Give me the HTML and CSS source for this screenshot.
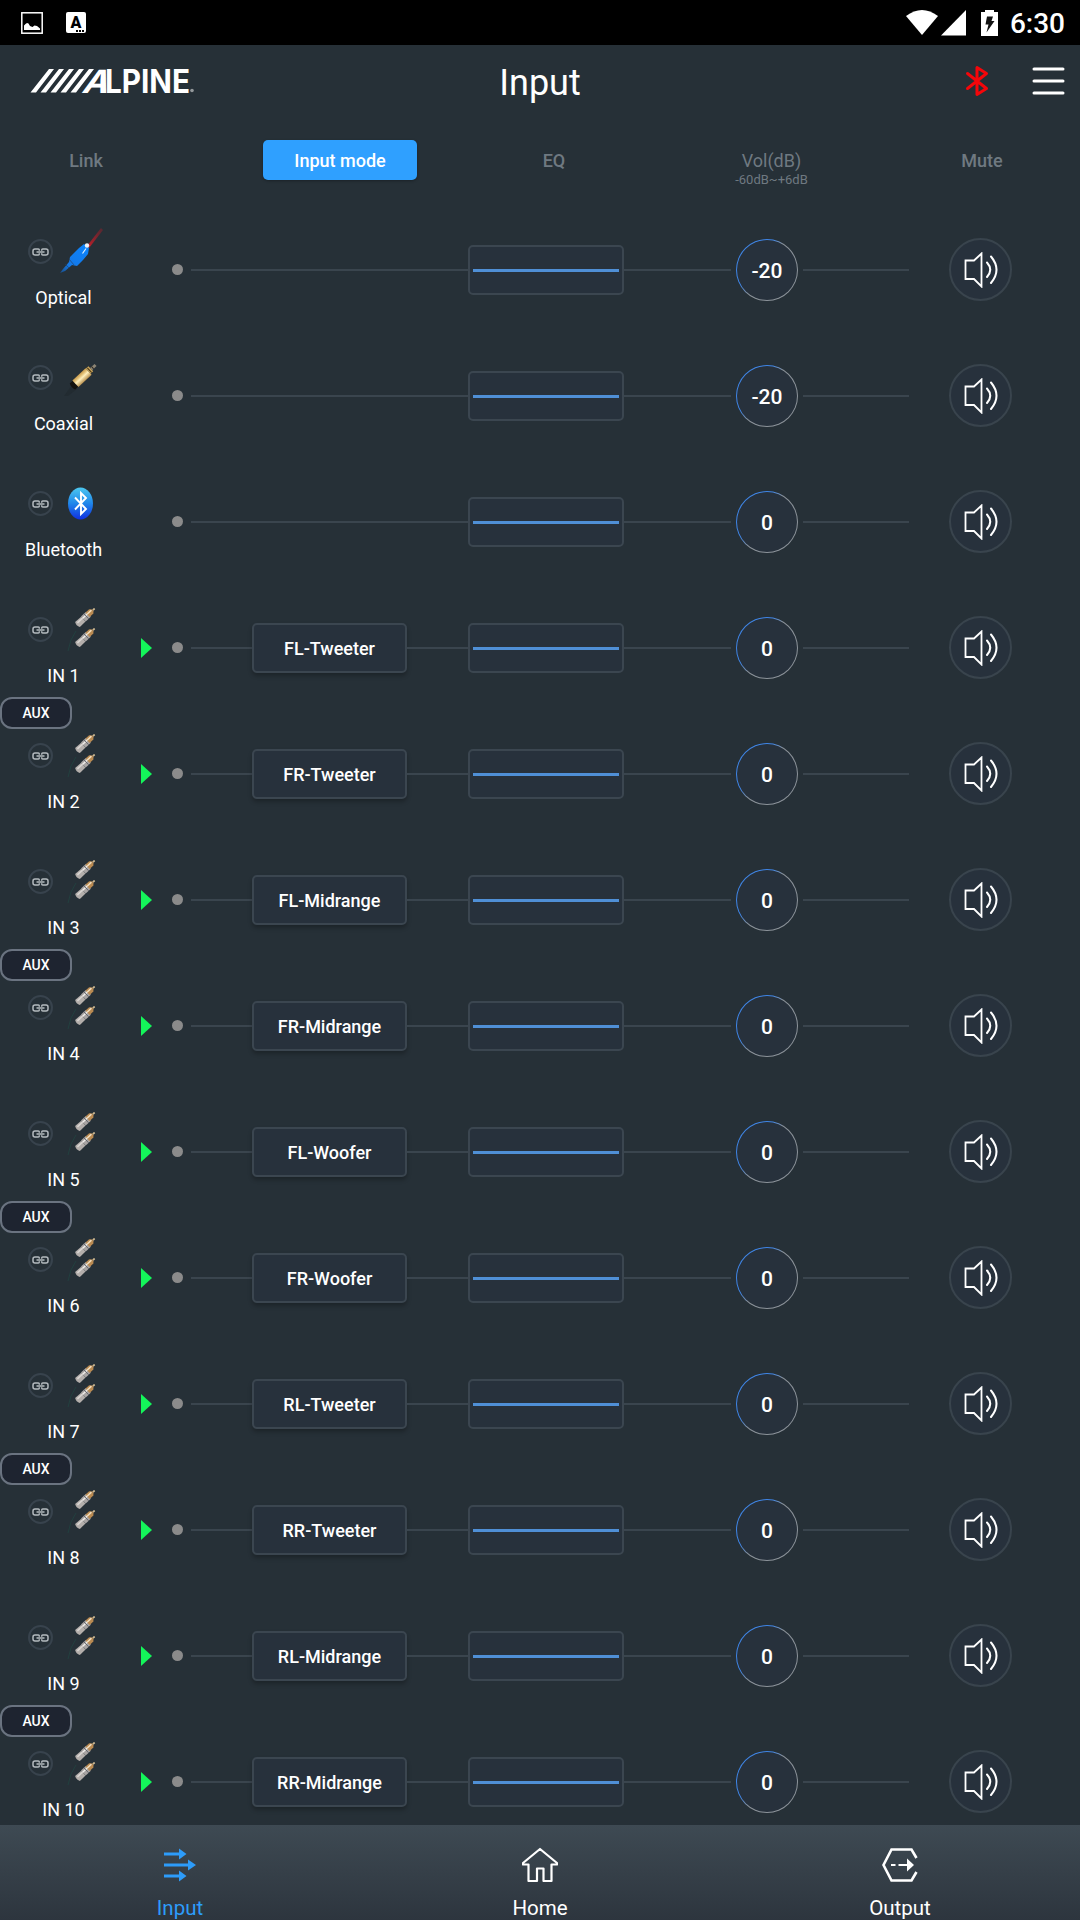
FILE: index.html
```html
<!DOCTYPE html>
<html lang="en">
<head>
  <meta charset="UTF-8" />
  <meta name="viewport" content="width=device-width, initial-scale=1.0"/>
  <title>Input</title>
  <link rel="stylesheet" href="styles.css">
</head>
<body>

  <svg class="sprite" width="0" height="0">
    <defs>
      <linearGradient id="blue-cable" x1="0" y1="1" x2="1" y2="0">
        <stop offset="0" stop-color="#1a4d86"/>
        <stop offset="0.3" stop-color="#1478e6"/>
        <stop offset="1" stop-color="#0a84ff"/>
      </linearGradient>
      <linearGradient id="beam" x1="0" y1="1" x2="1" y2="0">
        <stop offset="0" stop-color="#c81e28"/>
        <stop offset="1" stop-color="#a01c28" stop-opacity="0.35"/>
      </linearGradient>
      <linearGradient id="gold" x1="0" y1="0" x2="0" y2="1">
        <stop offset="0" stop-color="#c79a4c"/>
        <stop offset="0.25" stop-color="#e2c077"/>
        <stop offset="0.5" stop-color="#fff0bd"/>
        <stop offset="1" stop-color="#b8904f"/>
      </linearGradient>
      <linearGradient id="bt-oval" x1="0" y1="0" x2="0" y2="1">
        <stop offset="0" stop-color="#4cc8f0"/>
        <stop offset="0.5" stop-color="#1f86ea"/>
        <stop offset="1" stop-color="#1030e0"/>
      </linearGradient>
    </defs>

    <symbol id="icon-link" viewBox="0 0 17 8">
      <path d="M7.300 2.800V1.900Q7.300 1 6.300 1H3Q1 1 1 3v2Q1 7 3 7h3.300q1 0 1-1V5.200M9.700 2.800V1.900Q9.700 1 10.700 1H14Q16 1 16 3v2Q16 7 14 7h-3.300q-1 0-1-1V5.200M4.500 4h8" fill="none" stroke="#b4babf" stroke-width="1.500"/>
    </symbol>

    <symbol id="icon-optical" viewBox="0 0 46 48">
      <path d="M27 20 41 2l2 2L29 22z" fill="url(#beam)"/>
      <path d="M19 22 24 18l5 4-1 6-5 6-6 6-5-1-7 6-5 2 3-4 6-7 1-5z" fill="url(#blue-cable)"/>
      <path d="M9 33l5 6M5 38l4 4" stroke="#27405c" stroke-width="0.600"/>
      <path d="m22.500 27.500 3.500-5" stroke="#dff1ff" stroke-width="1.200"/>
      <circle cx="27" cy="19.500" r="2.200" fill="#eef3f6"/>
    </symbol>

    <symbol id="icon-coaxial" viewBox="0 0 46 48">
      <path d="M4 44 12 33l5 4-9 7z" fill="#1c2023" opacity="0.300"/>
      <g transform="translate(12.500 34.500) rotate(-43)">
        <path d="M0-4H5V4H0Q-2 0 0-4z" fill="#15130f"/>
        <path d="M4-4.500H22V4.500H4z" fill="url(#gold)"/>
        <path d="M22-4h3.500v7h-3.500z" fill="#c9a55a"/>
        <path d="M23.500-3.500v6.500" stroke="#4a3819"/>
        <path d="M25.500-1.500h6v3h-6z" fill="#8c8474"/>
        <path d="M27.500-1.500v3" stroke="#2b261d"/>
      </g>
    </symbol>

    <symbol id="icon-bt-oval" viewBox="0 0 46 48">
      <ellipse cx="20.500" cy="25.500" rx="12.500" ry="16" fill="url(#bt-oval)"/>
      <path d="M15 19.500 26 31 21 36V15L26 20 15 31.500" fill="none" stroke="#fff" stroke-width="1.900"/>
    </symbol>

    <symbol id="plug" viewBox="0 0 21 20">
      <g transform="translate(3 16.500) rotate(-43)">
        <path d="M0-3.500 8-3.200V3.200L0 3.500Q-2 0 0-3.500z" fill="#b3aeab"/>
        <path d="M1-1.200H12" stroke="#d9d5d2" stroke-width="1.600"/>
        <path d="M8-3.500h7v7H8z" fill="#a9a5a4"/>
        <path d="M8-1h7" stroke="#f1eeea" stroke-width="1.500"/>
        <path d="M12-3.500v7" stroke="#4b4f55" stroke-width="0.700"/>
        <path d="M14-3.300h5L21-1V1l-2 1.800h-5z" fill="#b98a52"/>
        <path d="M14-1h6" stroke="#f2dfc0" stroke-width="1.500"/>
        <path d="M21 0h2.500" stroke="#cdb791" stroke-width="1.800"/>
      </g>
    </symbol>

    <symbol id="icon-rca" viewBox="0 0 46 48">
      <path d="M8 47q2-12 8-20" fill="none" stroke="#22403f" stroke-width="1"/>
      <use href="#plug" x="14.500" y="4" width="21" height="20"/>
      <use href="#plug" x="14.500" y="24" width="21" height="20"/>
    </symbol>

    <symbol id="icon-speaker" viewBox="0 0 34 36">
      <path d="M1.500 8.500H10L17.500 1.500V34.500L10 27H1.500z" stroke-width="1.800"/>
      <path d="M23 10.500q6.500 7.200 0 14.500M27 4.500q11 13.300 0 26.500" stroke-width="2" stroke-linecap="round"/>
    </symbol>
  </svg>

  <div class="status-bar">
    <svg width="22" height="22" viewBox="0 0 22 22">
      <rect x="0.800" y="0.800" width="20.400" height="20.400" fill="none" stroke="#fff" stroke-width="1.500"/>
      <path d="M3 18V13.500L4.500 12 6 11l1.500.5L9 14l2.500 1 2-1.500 2.500.5 3 2.500V18z" fill="#fff"/>
    </svg>
    <span class="lang-badge">A</span>
    <div class="status-right">
      <svg width="32" height="26" viewBox="0 0 32 26">
        <path d="M0 6Q16-6 32 6L16 25z" fill="#fff"/>
      </svg>
      <svg width="25" height="26" viewBox="0 0 25 26">
        <path d="M25 0V25.500H0z" fill="#fff"/>
      </svg>
      <svg class="battery" width="17" height="26" viewBox="0 0 17 26">
        <path d="M4 0h9v2h4v24H0V2h4z" fill="#fff"/>
        <path d="M6 6.500h6L10.500 11H13.500L5.500 22.500 7.500 14.500H4.500z" fill="#111"/>
      </svg>
      <span class="clock">6:30</span>
    </div>
  </div>

  <header class="app-bar">
    <svg class="logo" width="166" height="26" viewBox="0 0 166 26" aria-label="Alpine">
      <g fill="#fff">
        <path d="M-.5 24.500 18 1h5L5 24.500zM9.500 24.500 28 1h5L15 24.500zM19.500 24.500 38 1h5L25 24.500zM29.500 24.500 48 1h5L35 24.500zM39.500 24.500 58 1h5L45 24.500z"/>
        <text class="logo-text" transform="translate(50 24.500) skewX(-20)" textLength="26" lengthAdjust="spacingAndGlyphs">A</text>
        <text class="logo-text" x="74" y="24.500" textLength="85" lengthAdjust="spacingAndGlyphs">LPINE</text>
        <circle cx="161" cy="22.500" r="1.800" opacity="0.500"/>
      </g>
    </svg>
    <h1>Input</h1>
    <div class="actions">
      <svg width="24" height="32" viewBox="0 0 24 32">
        <path d="M2.500 8.500 21.500 23.500 12 29.500V2.500L21.500 8.500 2.500 23.500" fill="none" stroke="#f5060a" stroke-width="3" stroke-linejoin="round" stroke-linecap="round"/>
      </svg>
      <svg width="33" height="30" viewBox="0 0 33 30">
        <path d="M2 3H31M2 15H31M2 27H31" stroke="#fff" stroke-width="3" stroke-linecap="round"/>
      </svg>
    </div>
  </header>

  <div class="column-heads">
    <span class="head">Link</span>
    <button class="mode-toggle">Input mode</button>
    <span class="head">EQ</span>
    <span class="head head-vol">Vol(dB)<small>-60dB~+6dB</small></span>
    <span class="head">Mute</span>
  </div>

  <main id="channels"></main>

  <nav class="tab-bar">
    <a class="tab active">
      <svg width="36" height="36" viewBox="0 0 36 36">
        <path d="M2 7H18M2 18H27M2 29H18" stroke="currentColor" stroke-width="3"/>
        <path d="M17 1.500 24.500 7 17 12.500zM26 12.500 34 18 26 23.500zM17 23.500 24.500 29 17 34.500z" fill="currentColor"/>
      </svg>
      Input
    </a>
    <a class="tab">
      <svg width="36" height="36" viewBox="0 0 36 36" fill="none" stroke="currentColor" stroke-width="2.200" stroke-linejoin="round">
        <path d="M18 2 35 16V17.500H29.500V34H21.500V21.500H15V34H6.500V17.500H1V16z"/>
      </svg>
      Home
    </a>
    <a class="tab">
      <svg width="36" height="36" viewBox="0 0 36 36" fill="none" stroke="currentColor" stroke-width="2.600">
        <path d="M34.500 11 29.500 2.500H9.500L1.500 18 9.500 33.500H29.500L34.500 25"/>
        <path d="M9 18h4.500M16.500 18h10" stroke-width="2"/>
        <path d="M25 11.500 32 18 25 24.500z" fill="currentColor" stroke="none"/>
      </svg>
      Output
    </a>
  </nav>

  <script>
    const channels = [
      { name: 'Optical', icon: 'optical', vol: -20 },
      { name: 'Coaxial', icon: 'coaxial', vol: -20 },
      { name: 'Bluetooth', icon: 'bt-oval', vol: 0 },
      { name: 'IN 1', icon: 'rca', vol: 0, mode: 'FL-Tweeter', aux: true },
      { name: 'IN 2', icon: 'rca', vol: 0, mode: 'FR-Tweeter' },
      { name: 'IN 3', icon: 'rca', vol: 0, mode: 'FL-Midrange', aux: true },
      { name: 'IN 4', icon: 'rca', vol: 0, mode: 'FR-Midrange' },
      { name: 'IN 5', icon: 'rca', vol: 0, mode: 'FL-Woofer', aux: true },
      { name: 'IN 6', icon: 'rca', vol: 0, mode: 'FR-Woofer' },
      { name: 'IN 7', icon: 'rca', vol: 0, mode: 'RL-Tweeter', aux: true },
      { name: 'IN 8', icon: 'rca', vol: 0, mode: 'RR-Tweeter' },
      { name: 'IN 9', icon: 'rca', vol: 0, mode: 'RL-Midrange', aux: true },
      { name: 'IN 10', icon: 'rca', vol: 0, mode: 'RR-Midrange' }
    ];

    document.getElementById('channels').innerHTML = channels.map(ch => `
      <div class="channel">
        <div class="source">
          <div class="source-icons">
            <span class="link-btn"><svg width="17" height="8"><use href="#icon-link"/></svg></span>
            <svg width="46" height="48"><use href="#icon-${ch.icon}"/></svg>
          </div>
          <div class="source-name">${ch.name}</div>
        </div>
        <span class="arrow ${ch.mode ? 'on' : ''}"></span>
        <span class="dot"></span>
        <span class="wire"></span>
        ${ch.mode ? `<button class="mode">${ch.mode}</button><span class="wire wire-mid"></span>` : ''}
        <div class="eq"></div>
        <span class="wire wire-eq"></span>
        <div class="vol">${ch.vol}</div>
        <span class="wire wire-vol"></span>
        <button class="mute"><svg width="34" height="36"><use href="#icon-speaker"/></svg></button>
        ${ch.aux ? '<span class="aux">AUX</span>' : ''}
      </div>
    `).join('');
  </script>

</body>
</html>
```
FILE: styles.css
```css
* {
  box-sizing: border-box;
}

body {
  margin: 0;
  width: 1080px;
  height: 1920px;
  display: flex;
  flex-direction: column;
  overflow: hidden;
  background-color: #263037;
  color: white;
  font-family: Roboto, sans-serif;
}

svg {
  display: block;
  flex-shrink: 0;
}

button {
  padding: 0;
  border: none;
  color: white;
  font-family: inherit;
  font-weight: 500;
}

.sprite {
  height: 0;
}

/* status bar */
.status-bar {
  height: 45px;
  flex-shrink: 0;
  padding: 0 15px 0 21px;
  background-color: black;
  display: flex;
  align-items: center;
}

/* the dots in the corner are the second background */
.lang-badge {
  width: 20px;
  height: 21px;
  margin-left: 23px;
  border-radius: 2px;
  background: repeating-linear-gradient(to right, black 0 2px, white 2px 3px) 10px 18px / 8px 2px no-repeat white;
  color: black;
  font-size: 16px;
  font-weight: 900;
  line-height: 21px;
  text-align: center;
}

.status-right {
  margin-left: auto;
  display: flex;
  align-items: center;
  gap: 3px;
}

.battery {
  margin-left: 12px;
}

.clock {
  margin-left: 9px;
  font-size: 28px;
  font-weight: 500;
  line-height: 32px;
  padding-top: 3px;
}

/* title */
.app-bar {
  height: 72px;
  flex-shrink: 0;
  padding: 0 15px 0 31px;
  display: grid;
  grid-template-columns: 1fr auto 1fr;
  align-items: center;
}

.logo {
  overflow: visible;
}

.logo-text {
  font-family: Inter, sans-serif;
  font-size: 32px;
  font-weight: 700;
}

h1 {
  margin: 4px 16px 0 0;
  font-size: 36px;
  font-weight: 400;
  line-height: 42px;
}

.actions {
  display: flex;
  align-items: center;
  justify-content: flex-end;
  gap: 43px;
}

/* column heads */
.column-heads {
  height: 90px;
  flex-shrink: 0;
  padding-top: 23px;
  display: grid;
  grid-template-columns: 172px 336px 92px 342px 80px;
  align-items: start;
  justify-items: center;
  color: #6f7981;
  font-size: 18px;
  font-weight: 500;
  line-height: 40px;
}

.head {
  padding-top: 1px;
}

.mode-toggle {
  width: 154px;
  height: 40px;
  border-radius: 5px;
  background-color: #2fa0ff;
  font-size: 18px;
  box-shadow: 0 1px 3px rgba(0, 0, 0, 0.3);
}

.head-vol {
  padding-left: 1px;
  font-weight: 400;
  text-align: center;
}

.head-vol small {
  display: block;
  margin-top: -10px;
  font-size: 13px;
  line-height: 18px;
}

/* channels */
#channels {
  flex: 1;
  min-height: 0;
  overflow: hidden;
}

.channel {
  position: relative;
  height: 126px;
  display: flex;
  align-items: center;
}

.source {
  width: 127px;
  height: 126px;
  padding-top: 19px;
}

.source-icons {
  display: flex;
  align-items: center;
  padding-left: 28px;
  gap: 7px;
}

.link-btn {
  width: 25px;
  height: 25px;
  margin-top: 3px;
  border: 2px solid #38434d;
  border-radius: 50%;
  display: flex;
  align-items: center;
  justify-content: center;
}

.source-name {
  margin-top: 13px;
  text-align: center;
  font-size: 18px;
  line-height: 22px;
}

.arrow {
  width: 11px;
  height: 20px;
  margin: 0 20px 0 14px;
}

.arrow.on {
  background-color: #14f55a;
  clip-path: polygon(0 0, 100% 50%, 0 100%);
}

.dot {
  width: 11px;
  height: 11px;
  margin: 0 8px 1px 0;
  border-radius: 50%;
  background-color: #8b8b8b;
}

.wire {
  flex: 1;
  height: 2px;
  background-color: #3a454e;
}

.wire-mid {
  flex: 0 0 61px;
}

.wire-eq {
  flex: 0 0 107px;
}

.wire-vol {
  flex: 0 0 106px;
}

.mode,
.eq {
  width: 155px;
  height: 50px;
  flex-shrink: 0;
  border: 2px solid #3b4650;
  border-radius: 5px;
  background-color: #27313c;
  font-size: 18px;
}

.mode {
  box-shadow: 0 3px 4px rgba(0, 0, 0, 0.25);
}

.eq {
  width: 156px;
  display: flex;
  align-items: center;
  padding: 1px 3px 0;
}

.eq::before {
  content: "";
  flex: 1;
  height: 3px;
  background-color: #4f8fd6;
}

.vol {
  width: 62px;
  height: 62px;
  margin: 0 5px;
  flex-shrink: 0;
  border: 1px solid transparent;
  border-radius: 50%;
  background:
    linear-gradient(#27313c, #27313c) padding-box,
    linear-gradient(125deg, #3f86e8 35%, #8d949b 48%) border-box;
  font-size: 21px;
  font-weight: 500;
  line-height: 62px;
  text-align: center;
}

.mute {
  width: 63px;
  height: 63px;
  margin: 0 68px 1px 40px;
  flex-shrink: 0;
  border: 2px solid #39444d;
  border-radius: 50%;
  background-color: #27313c;
  display: flex;
  align-items: center;
  justify-content: center;
  fill: none;
  stroke: white;
}

.aux {
  position: absolute;
  left: 0;
  top: 112px;
  z-index: 1;
  width: 72px;
  height: 32px;
  border: 2px solid #6a7380;
  border-radius: 12px;
  background-color: #1e2430;
  font-size: 14px;
  font-weight: 500;
  line-height: 29px;
  text-align: center;
}

/* bottom tabs */
.tab-bar {
  height: 95px;
  flex-shrink: 0;
  display: grid;
  grid-template-columns: repeat(3, 1fr);
  background: linear-gradient(#3e4a53, #2d353e);
}

.tab {
  padding-top: 22px;
  display: flex;
  flex-direction: column;
  align-items: center;
  gap: 13px;
  font-size: 20.500px;
  line-height: 24px;
}

.tab.active {
  color: #2d9cfa;
}
```
